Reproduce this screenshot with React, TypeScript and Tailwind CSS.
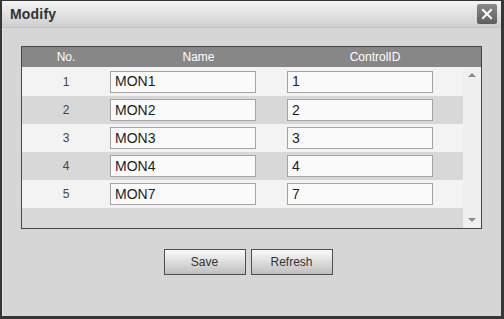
import React from "react";

const rows = [
  { no: 1, name: "MON1", id: "1" },
  { no: 2, name: "MON2", id: "2" },
  { no: 3, name: "MON3", id: "3" },
  { no: 4, name: "MON4", id: "4" },
  { no: 5, name: "MON7", id: "7" },
];

export default function App() {
  return (
    <div className="w-[504px] h-[319px] box-border border-l-2 border-t border-r-[3px] border-b-[3px] border-[#363636] bg-[#d6d6d6] flex flex-col font-['Liberation_Sans',Arial,sans-serif] overflow-hidden">
      <div className="h-[27px] flex items-center justify-between pl-[8px] pr-[4px] bg-gradient-to-b from-[#f4f4f4] to-[#cfcfcf] border-b border-[#c4c4c4]">
        <span className="text-[14px] font-bold text-[#333] tracking-[0.2px]">Modify</span>
        <div className="w-[20px] h-[20px] rounded-[2px] bg-gradient-to-b from-[#8a8a8a] to-[#5e5e5e] flex items-center justify-center">
          <svg width="12" height="12" viewBox="0 0 12 12">
            <path d="M2 2 L10 10 M10 2 L2 10" stroke="#ffffff" strokeWidth="2" strokeLinecap="square" />
          </svg>
        </div>
      </div>
      <div className="flex-1 flex flex-col border-l border-[#e6e6e6] pl-[18px] pt-[18px]">
        <div className="w-[461px] h-[183px] border border-[#474747] bg-[#d8d8d8] flex flex-col">
          <div className="h-[20px] flex bg-[#878787] text-white text-[12px] items-center">
            <div className="w-[88px] text-center">No.</div>
            <div className="w-[177px] text-center">Name</div>
            <div className="w-[176px] text-center">ControlID</div>
          </div>
          <div className="flex flex-1">
            <div className="w-[441px] flex flex-col">
              {rows.map((r, i) => (
                <div
                  key={r.no}
                  className={`flex items-center ${i % 2 === 0 ? "bg-[#f3f3f3]" : "bg-[#d8d8d8]"} ${i === 0 ? "h-[29px]" : "h-[28px]"}`}
                >
                  <div className="w-[88px] text-center text-[12px] text-[#444]">{r.no}</div>
                  <div className="w-[177px]">
                    <div className="w-[146px] h-[22px] border border-[#a3a3a3] bg-[#fafafa] text-[14px] text-[#1e1e1e] pl-[4px] flex items-center">
                      {r.name}
                    </div>
                  </div>
                  <div className="w-[176px]">
                    <div className="w-[146px] h-[22px] border border-[#a3a3a3] bg-[#fafafa] text-[14px] text-[#1e1e1e] pl-[4px] flex items-center">
                      {r.id}
                    </div>
                  </div>
                </div>
              ))}
            </div>
            <div className="w-[18px] bg-[#f0f0f0] flex flex-col justify-between items-center py-[5px]">
              <svg width="8" height="5" viewBox="0 0 8 5">
                <path d="M0 5 L4 1 L8 5 Z" fill="#8c8c8c" />
              </svg>
              <svg width="8" height="5" viewBox="0 0 8 5">
                <path d="M0 0 L4 4 L8 0 Z" fill="#8c8c8c" />
              </svg>
            </div>
          </div>
        </div>
        <div className="flex justify-center gap-[5px] mt-[20px] pr-[26px]">
          <button className="w-[82px] h-[26px] border border-[#4e4e4e] bg-gradient-to-b from-[#fbfbfb] to-[#bfbfbf] text-[12px] text-[#333]">
            Save
          </button>
          <button className="w-[82px] h-[26px] border border-[#4e4e4e] bg-gradient-to-b from-[#fbfbfb] to-[#bfbfbf] text-[12px] text-[#333]">
            Refresh
          </button>
        </div>
      </div>
    </div>
  );
}
